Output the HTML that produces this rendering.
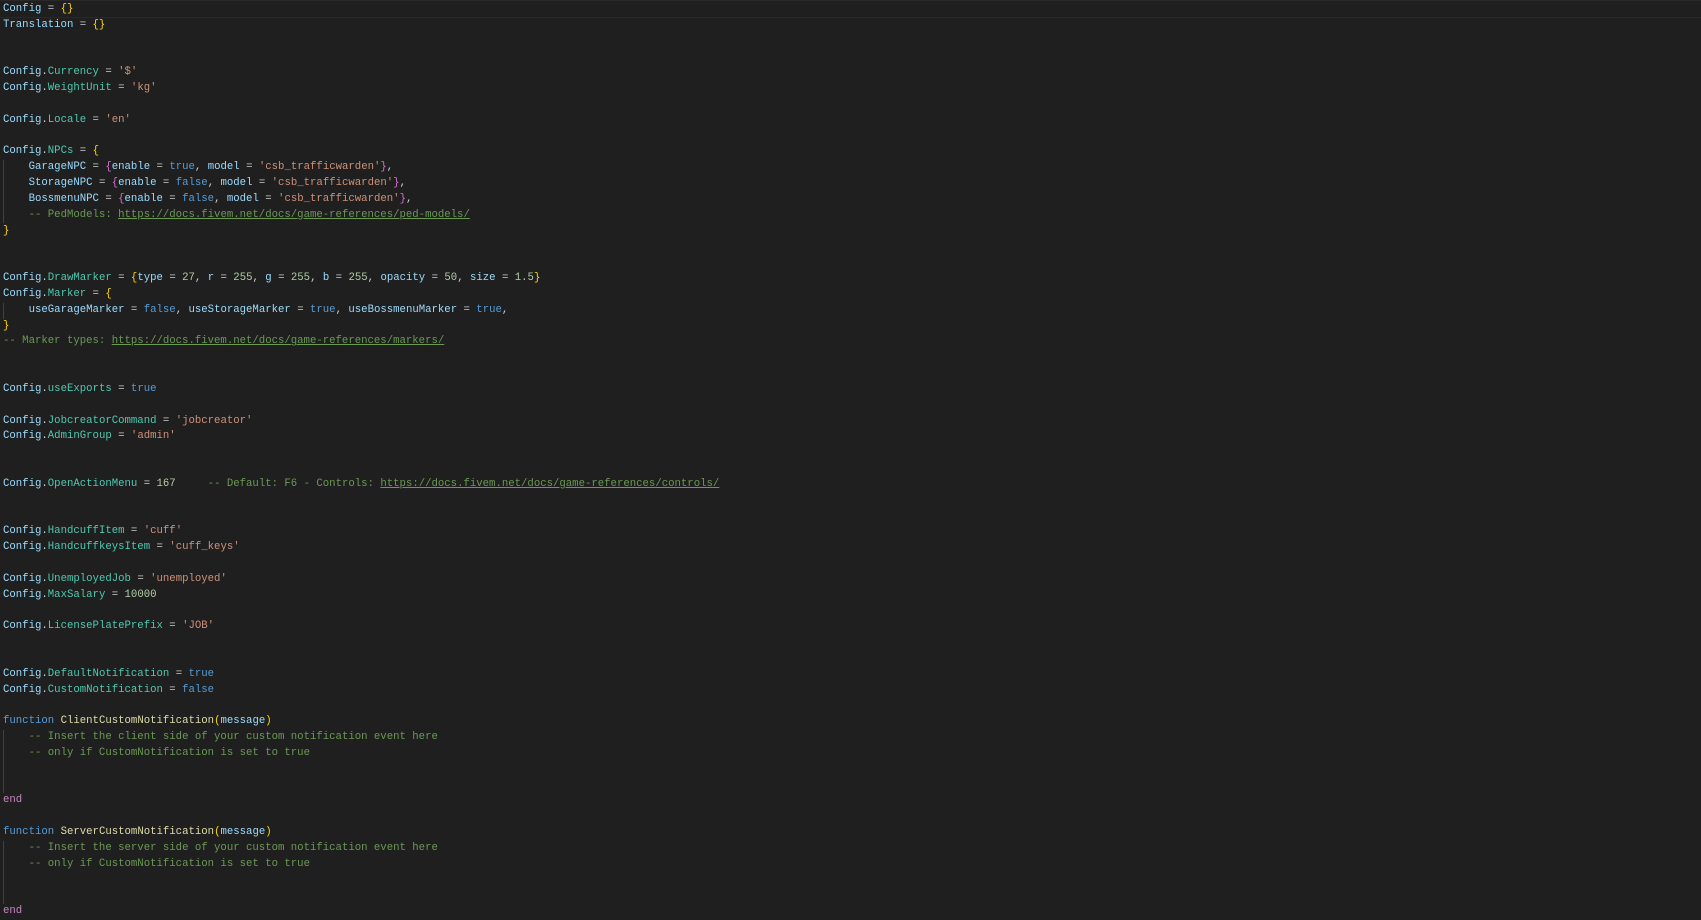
<!DOCTYPE html>
<html><head><style>
html,body{margin:0;padding:0;background:#1f1f1f;width:1701px;height:911px;overflow:hidden}
pre{margin:0;position:absolute;left:3px;top:2px;font-family:"Liberation Mono",monospace;font-size:10.67px;line-height:15.83px;color:#cccccc;white-space:pre}
.hl{position:absolute;left:0;top:0;width:1701px;height:16px;border-top:1px solid #282828;border-bottom:1px solid #282828}
.v{color:#9cdcfe}.f{color:#4ec9b0}.s{color:#ce9178}.n{color:#b5cea8}.k{color:#569cd6}.c{color:#6a9955}.u{color:#6a9955;text-decoration:underline}
.b{color:#ffd700}.p{color:#da70d6}.kw{color:#c586c0}.fn{color:#dcdcaa}
.g{position:absolute;left:3px;width:1px;background:#404040}
</style></head><body>
<div class="hl"></div>
<div class="g" style="top:160px;height:63px"></div>
<div class="g" style="top:303px;height:16px"></div>
<div class="g" style="top:730px;height:63px"></div>
<div class="g" style="top:841px;height:63px"></div>
<pre><span class="v">Config</span> = <span class="b">{}</span>
<span class="v">Translation</span> = <span class="b">{}</span>


<span class="v">Config</span>.<span class="f">Currency</span> = <span class="s">'$'</span>
<span class="v">Config</span>.<span class="f">WeightUnit</span> = <span class="s">'kg'</span>

<span class="v">Config</span>.<span class="f">Locale</span> = <span class="s">'en'</span>

<span class="v">Config</span>.<span class="f">NPCs</span> = <span class="b">{</span>
    <span class="v">GarageNPC</span> = <span class="p">{</span><span class="v">enable</span> = <span class="k">true</span>, <span class="v">model</span> = <span class="s">'csb_trafficwarden'</span><span class="p">}</span>,
    <span class="v">StorageNPC</span> = <span class="p">{</span><span class="v">enable</span> = <span class="k">false</span>, <span class="v">model</span> = <span class="s">'csb_trafficwarden'</span><span class="p">}</span>,
    <span class="v">BossmenuNPC</span> = <span class="p">{</span><span class="v">enable</span> = <span class="k">false</span>, <span class="v">model</span> = <span class="s">'csb_trafficwarden'</span><span class="p">}</span>,
    <span class="c">-- PedModels: </span><span class="u">https://docs.fivem.net/docs/game-references/ped-models/</span>
<span class="b">}</span>


<span class="v">Config</span>.<span class="f">DrawMarker</span> = <span class="b">{</span><span class="v">type</span> = <span class="n">27</span>, <span class="v">r</span> = <span class="n">255</span>, <span class="v">g</span> = <span class="n">255</span>, <span class="v">b</span> = <span class="n">255</span>, <span class="v">opacity</span> = <span class="n">50</span>, <span class="v">size</span> = <span class="n">1.5</span><span class="b">}</span>
<span class="v">Config</span>.<span class="f">Marker</span> = <span class="b">{</span>
    <span class="v">useGarageMarker</span> = <span class="k">false</span>, <span class="v">useStorageMarker</span> = <span class="k">true</span>, <span class="v">useBossmenuMarker</span> = <span class="k">true</span>,
<span class="b">}</span>
<span class="c">-- Marker types: </span><span class="u">https://docs.fivem.net/docs/game-references/markers/</span>


<span class="v">Config</span>.<span class="f">useExports</span> = <span class="k">true</span>

<span class="v">Config</span>.<span class="f">JobcreatorCommand</span> = <span class="s">'jobcreator'</span>
<span class="v">Config</span>.<span class="f">AdminGroup</span> = <span class="s">'admin'</span>


<span class="v">Config</span>.<span class="f">OpenActionMenu</span> = <span class="n">167</span>     <span class="c">-- Default: F6 - Controls: </span><span class="u">https://docs.fivem.net/docs/game-references/controls/</span>


<span class="v">Config</span>.<span class="f">HandcuffItem</span> = <span class="s">'cuff'</span>
<span class="v">Config</span>.<span class="f">HandcuffkeysItem</span> = <span class="s">'cuff_keys'</span>

<span class="v">Config</span>.<span class="f">UnemployedJob</span> = <span class="s">'unemployed'</span>
<span class="v">Config</span>.<span class="f">MaxSalary</span> = <span class="n">10000</span>

<span class="v">Config</span>.<span class="f">LicensePlatePrefix</span> = <span class="s">'JOB'</span>


<span class="v">Config</span>.<span class="f">DefaultNotification</span> = <span class="k">true</span>
<span class="v">Config</span>.<span class="f">CustomNotification</span> = <span class="k">false</span>

<span class="k">function</span> <span class="fn">ClientCustomNotification</span><span class="b">(</span><span class="v">message</span><span class="b">)</span>
    <span class="c">-- Insert the client side of your custom notification event here</span>
    <span class="c">-- only if CustomNotification is set to true</span>


<span class="kw">end</span>

<span class="k">function</span> <span class="fn">ServerCustomNotification</span><span class="b">(</span><span class="v">message</span><span class="b">)</span>
    <span class="c">-- Insert the server side of your custom notification event here</span>
    <span class="c">-- only if CustomNotification is set to true</span>


<span class="kw">end</span>
</pre>
</body></html>
